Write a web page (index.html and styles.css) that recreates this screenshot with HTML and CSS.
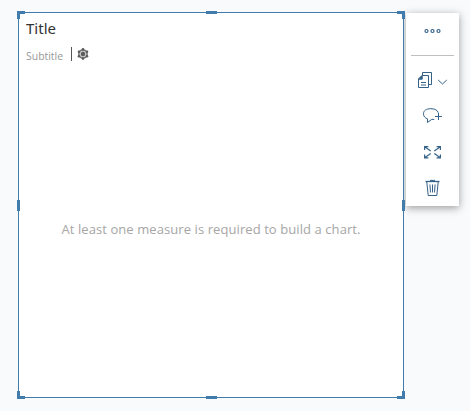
FILE: index.html
```html
<!DOCTYPE html>
<html lang="en">
<head>
<meta charset="utf-8">
<title>Chart</title>
<link rel="stylesheet" href="styles.css">
</head>
<body>
<main class="canvas">
  <section class="chart">
    <h1 class="title">Title</h1>
    <div class="subrow">
      <span class="subtitle">Subtitle</span>
      <span class="divider"></span>
      <svg class="gear" width="12" height="12" viewBox="0 0 12 12">
        <circle cx="6" cy="6" r="4.2" fill="#c8c8c8" stroke="#6b6b6b" stroke-width="1.3"/>
        <g fill="#5c5c5c"><circle cx="6" cy="1.4" r="1.3"/><circle cx="10" cy="3.7" r="1.3"/><circle cx="10" cy="8.3" r="1.3"/><circle cx="6" cy="10.6" r="1.3"/><circle cx="2" cy="8.3" r="1.3"/><circle cx="2" cy="3.7" r="1.3"/><circle cx="6" cy="6" r="2.2"/></g>
      </svg>
    </div>
    <p class="message">At least one measure is required to build a chart.</p>
    <i class="corner tl"></i><i class="corner tr"></i><i class="corner bl"></i><i class="corner br"></i>
    <i class="grip top"></i><i class="grip bottom"></i><i class="grip left"></i><i class="grip right"></i>
  </section>
  <nav class="toolbar">
    <svg class="tool more" width="53" height="42" viewBox="0 0 53 42">
      <g stroke-width="1.2"><circle cx="20.5" cy="18" r="1.5"/><circle cx="26.5" cy="18" r="1.5"/><circle cx="32.5" cy="18" r="1.5"/></g>
    </svg>
    <hr class="rule">
    <svg class="tool" width="53" height="36" viewBox="406 62 53 36">
      <path d="M422.5 75V72.5H431.5V84.5H429"/>
      <path d="M418.5 79L422 75.5H428.5V87.5H418.5Z"/>
      <path d="M418.5 79.2L422.2 75.5V79.2Z" fill="#346187"/>
      <path d="M421 82.5H426M421 85H426"/>
      <path d="M438.2 80L442.5 84L446.8 80"/>
    </svg>
    <svg class="tool" width="53" height="36" viewBox="406 98 53 36">
      <path d="M438.2 112.7C437.5 110.2 435 108.7 431 108.7C426 108.7 423.5 110.7 423.5 113.8C423.5 116.4 425 118 427.5 118.8V122.5L431.7 119.4H434.2"/>
      <path d="M438.5 113V120M435 116.5H442"/>
    </svg>
    <svg class="tool" width="53" height="36" viewBox="406 134 53 36">
      <path d="M424.6 150V146.6H428.4M425 147L430.7 151M440.4 150V146.6H436.6M440 147L434.3 151M424.6 154.5V157.9H428.4M425 157.5L430.7 153.5M440.4 154.5V157.9H436.6M440 157.5L434.3 153.5" stroke-width="1.15"/>
    </svg>
    <svg class="tool" width="53" height="36" viewBox="406 170 53 36">
      <path d="M425.5 181.5H439.5" stroke-width="1.3"/><path d="M430 180.4H435"/>
      <path d="M426.8 182L428.2 195.5H436.8L438.2 182"/>
      <path d="M429.9 184.5L430.5 192.5M432.5 184.5V192.5M435.1 184.5L434.5 192.5"/>
    </svg>
  </nav>
</main>
</body>
</html>
```
FILE: styles.css
```css
* { box-sizing: border-box; }
body {
  margin: 0;
  background: #f9fafc;
  font-family: "Open Sans", sans-serif;
}
.canvas {
  display: flex;
  align-items: flex-start;
  width: 470px;
  height: 411px;
  padding: 12px 0 0 18px;
  overflow: hidden;
}
.chart {
  position: relative;
  z-index: 1;
  display: flex;
  flex-direction: column;
  width: 386px;
  height: 386px;
  border: 1px solid #427cac;
  background: #fff;
}
.title {
  margin: 4px 0 0 7px;
  font: 400 15px/22px "Noto Sans", sans-serif;
  color: #333;
}
.subrow {
  display: flex;
  height: 16px;
  margin: 8px 0 0 7px;
}
.subtitle {
  width: 45px;
  font-size: 10.5px;
  line-height: 19px;
  letter-spacing: -.03px;
  color: #999;
}
.divider {
  width: 1px;
  height: 14px;
  background: #555;
}
.gear { margin: 1px 0 0 5px; }
.message {
  margin: 155px 0 0;
  font-size: 13px;
  line-height: 22px;
  letter-spacing: .08px;
  text-align: center;
  color: #a6a6a6;
}
.toolbar {
  display: flex;
  flex-direction: column;
  width: 53px;
  height: 193px;
  margin: 1px 0 0 2px;
  background: #fff;
  box-shadow: 0 2px 8px rgba(0, 0, 0, .38);
}
.rule {
  width: 43px;
  height: 1px;
  margin: 0 5px 6px;
  border: 0;
  background: #bfbfbf;
}
.tool {
  display: block;
  flex: none;
  fill: none;
  stroke: #346187;
  stroke-width: 1;
}
.corner {
  position: absolute;
  width: 8px;
  height: 8px;
  border: 0 solid #427cac;
}
.tl { top: -2px; left: -2px; border-width: 3px 0 0 3px; }
.tr { top: -2px; right: -2px; border-width: 3px 3px 0 0; }
.bl { bottom: -2px; left: -2px; border-width: 0 0 3px 3px; }
.br { bottom: -2px; right: -2px; border-width: 0 3px 3px 0; }
.grip {
  position: absolute;
  background: #427cac;
}
.top, .bottom { left: 187px; width: 11px; height: 3px; }
.left, .right { top: 187px; width: 3px; height: 11px; }
.top { top: -2px; }
.bottom { bottom: -2px; }
.left { left: -2px; }
.right { right: -2px; }
```
